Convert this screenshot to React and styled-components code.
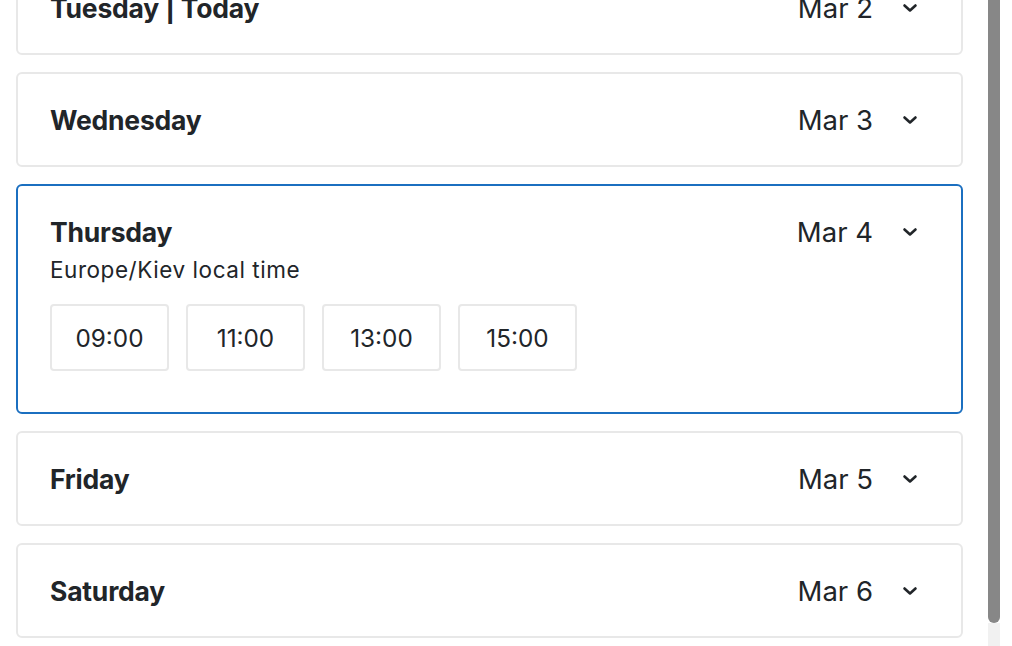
import React from "react";
import styled, { createGlobalStyle } from "styled-components";

const GlobalStyle = createGlobalStyle`
  html, body {
    margin: 0;
    padding: 0;
    background: #ffffff;
    overflow: hidden;
  }
  body {
    font-family: Inter, "Noto Sans", Arial, sans-serif;
    color: #212529;
  }
`;

const Page = styled.div`
  display: flex;
  width: 1012px;
  height: 646px;
  background: #ffffff;
`;

const Viewport = styled.div`
  flex: 0 0 988px;
  height: 646px;
  overflow: hidden;
`;

const DayList = styled.div`
  display: flex;
  flex-direction: column;
  gap: 17px;
  margin-top: -40px;
  padding: 0 25px 0 16px;
`;

const Card = styled.div`
  border: 2px solid ${(p) => (p.$active ? "#1b6fc0" : "#e8e8e8")};
  border-radius: 6px;
  padding: 31px 43px ${(p) => (p.$active ? "41px" : "29px")} 32px;
  background: #ffffff;
`;

const Header = styled.div`
  display: flex;
  align-items: center;
  height: 31px;
`;

const DayName = styled.div`
  flex: 1;
  font-size: 26.5px;
  font-weight: 700;
  line-height: 31px;
  letter-spacing: -0.2px;
`;

const DateLabel = styled.div`
  font-size: 27.5px;
  font-weight: 400;
  line-height: 31px;
`;

const Chevron = styled.svg`
  width: 16px;
  height: 10px;
  margin-left: 29px;
  margin-top: -1px;
  color: #212529;
`;

const Zone = styled.div`
  margin-top: 7px;
  font-size: 22.5px;
  letter-spacing: 0.55px;
  line-height: 30px;
`;

const Slots = styled.div`
  display: flex;
  gap: 17px;
  margin-top: 19px;
`;

const Slot = styled.button`
  width: 119px;
  height: 67px;
  border: 2px solid #e8e8e8;
  border-radius: 4px;
  background: #ffffff;
  color: #212529;
  font-family: inherit;
  font-size: 24.3px;
  padding: 0;
  cursor: pointer;
`;

const ScrollRail = styled.div`
  flex: 0 0 12px;
  display: flex;
  flex-direction: column;
`;

const Thumb = styled.div`
  height: 623px;
  background: #878787;
  border-radius: 0 0 6px 6px;
`;

const Track = styled.div`
  flex: 1;
  background: #f1f1f1;
`;

const days = [
  { name: "Tuesday | Today", date: "Mar 2" },
  { name: "Wednesday", date: "Mar 3" },
  { name: "Thursday", date: "Mar 4", open: true },
  { name: "Friday", date: "Mar 5" },
  { name: "Saturday", date: "Mar 6" },
];

const times = ["09:00", "11:00", "13:00", "15:00"];

const ChevronDown = () => (
  <Chevron viewBox="0 0 16 10" fill="none">
    <path d="M2.5 2.5 8 7.5 13.5 2.5" stroke="currentColor" strokeWidth="2.6" strokeLinecap="round" strokeLinejoin="round" />
  </Chevron>
);

const App = () => (
  <Page>
    <GlobalStyle />
    <Viewport>
      <DayList>
        {days.map((d) => (
          <Card key={d.date} $active={d.open}>
            <Header>
              <DayName>{d.name}</DayName>
              <DateLabel>{d.date}</DateLabel>
              <ChevronDown />
            </Header>
            {d.open && (
              <>
                <Zone>Europe/Kiev local time</Zone>
                <Slots>
                  {times.map((t) => (
                    <Slot key={t}>{t}</Slot>
                  ))}
                </Slots>
              </>
            )}
          </Card>
        ))}
      </DayList>
    </Viewport>
    <ScrollRail>
      <Thumb />
      <Track />
    </ScrollRail>
  </Page>
);

export default App;
